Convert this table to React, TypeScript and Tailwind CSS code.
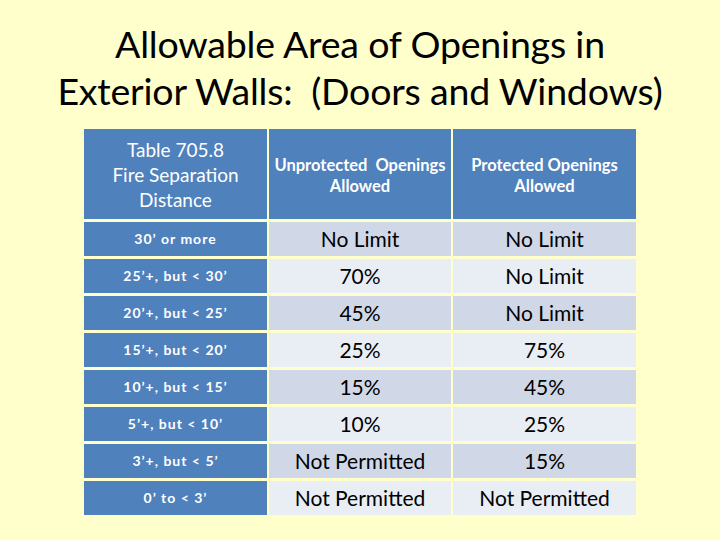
const rows: [string, string, string][] = [
  ['30’ or more', 'No Limit', 'No Limit'],
  ['25’+, but < 30’', '70%', 'No Limit'],
  ['20’+, but < 25’', '45%', 'No Limit'],
  ['15’+, but < 20’', '25%', '75%'],
  ['10’+, but < 15’', '15%', '45%'],
  ['5’+, but < 10’', '10%', '25%'],
  ['3’+, but < 5’', 'Not Permitted', '15%'],
  ['0’ to < 3’', 'Not Permitted', 'Not Permitted'],
]

export default function App() {
  return (
    <div
      className="w-[720px] h-[540px] bg-[#ffffcc] flex flex-col items-center text-black overflow-hidden"
      style={{ fontFamily: 'Lato, "Open Sans", sans-serif' }}
    >
      <h1 className="mt-[20px] text-center text-[37.5px] leading-[47px] tracking-[-0.2px]">
        Allowable Area of Openings in
        <br />
        Exterior Walls:&nbsp; (Doors and Windows)
      </h1>

      <div className="mt-[15px] grid grid-cols-[183px_182px_183px] grid-rows-[90px_repeat(8,34.5px)] gap-x-[2px] gap-y-[2.5px] self-start ml-[84px]">
        <div className="bg-[#4f81bd] text-white flex items-center justify-center text-center text-[19px] leading-[25px]">
          Table 705.8
          <br />
          Fire Separation
          <br />
          Distance
        </div>
        <div className="bg-[#4f81bd] text-white flex items-center justify-center pt-[3px] text-center text-[16.5px] leading-[21px] font-bold">
          Unprotected&nbsp; Openings
          <br />
          Allowed
        </div>
        <div className="bg-[#4f81bd] text-white flex items-center justify-center pt-[3px] text-center text-[16.5px] leading-[21px] font-bold">
          Protected Openings
          <br />
          Allowed
        </div>

        {rows.map(([dist, unprot, prot], i) => {
          const shade = i % 2 === 0 ? 'bg-[#d0d8e8]' : 'bg-[#e9edf4]'
          return [
            <div
              key={`d${i}`}
              className="bg-[#4f81bd] text-white font-bold text-[14px] tracking-[1px] flex items-center justify-center"
            >
              {dist}
            </div>,
            <div key={`u${i}`} className={`${shade} text-[21px] flex items-center justify-center`}>
              {unprot}
            </div>,
            <div key={`p${i}`} className={`${shade} text-[21px] flex items-center justify-center`}>
              {prot}
            </div>,
          ]
        })}
      </div>
    </div>
  )
}
